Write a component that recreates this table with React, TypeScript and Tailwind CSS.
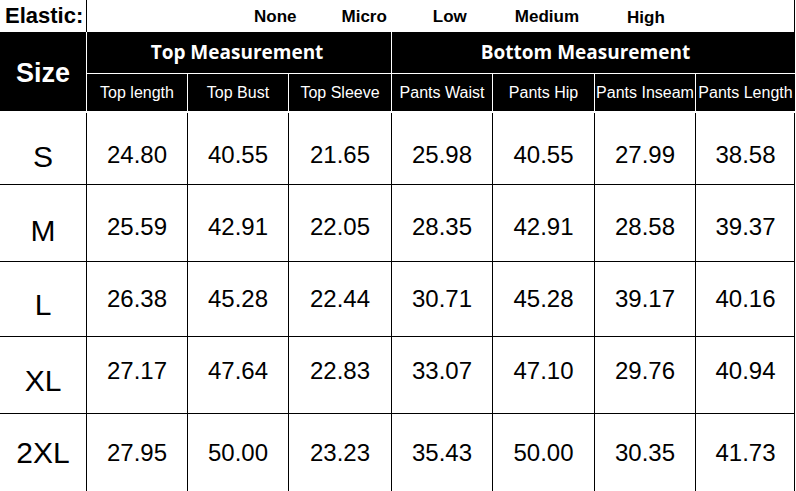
const colWidths = ["w-[101px]", "w-[101px]", "w-[103px]", "w-[101px]", "w-[102px]", "w-[101px]", "w-[99px]"];

const subHeaders = [
  "Top length",
  "Top Bust",
  "Top Sleeve",
  "Pants Waist",
  "Pants Hip",
  "Pants Inseam",
  "Pants Length",
];

const elasticOptions = [
  { label: "None", className: "ml-[167px]" },
  { label: "Micro", className: "ml-[45px]" },
  { label: "Low", className: "ml-[46px]" },
  { label: "Medium", className: "ml-[48px]" },
  { label: "High", className: "ml-[48px] pt-[2px]" },
];

const rows = [
  {
    size: "S",
    height: "h-[72px]",
    labelShift: "pt-[17px]",
    valueShift: "pt-[12px]",
    values: ["24.80", "40.55", "21.65", "25.98", "40.55", "27.99", "38.58"],
  },
  {
    size: "M",
    height: "h-[77px]",
    labelShift: "pt-[16px]",
    valueShift: "pt-[8px]",
    values: ["25.59", "42.91", "22.05", "28.35", "42.91", "28.58", "39.37"],
  },
  {
    size: "L",
    height: "h-[75px]",
    labelShift: "pt-[11px]",
    valueShift: "pt-0",
    values: ["26.38", "45.28", "22.44", "30.71", "45.28", "39.17", "40.16"],
  },
  {
    size: "XL",
    height: "h-[77px]",
    labelShift: "pt-[11px]",
    valueShift: "pb-[9px]",
    values: ["27.17", "47.64", "22.83", "33.07", "47.10", "29.76", "40.94"],
  },
  {
    size: "2XL",
    height: "h-[77px]",
    labelShift: "pt-0",
    valueShift: "pt-0",
    values: ["27.95", "50.00", "23.23", "35.43", "50.00", "30.35", "41.73"],
  },
];

export default function App() {
  return (
    <div className="w-[796px] h-[491px] overflow-hidden bg-white text-black font-['Liberation_Sans',Arial,sans-serif]">
      <div className="w-[795px]">
        {/* Elastic row */}
        <div className="flex h-[32px] border-r border-black">
          <div className="w-[87px] shrink-0 border-r border-black flex items-center pl-[5px] text-[22px] font-bold leading-none">
            Elastic:
          </div>
          <div className="flex flex-1 items-center text-[17px] font-bold leading-none">
            {elasticOptions.map((opt) => (
              <span key={opt.label} className={opt.className}>
                {opt.label}
              </span>
            ))}
          </div>
        </div>

        {/* Header */}
        <div className="flex h-[79px] bg-black text-white">
          <div className="w-[87px] shrink-0 border-r border-white flex items-center justify-center pt-[3px] text-[27px] font-bold leading-none">
            Size
          </div>
          <div className="flex flex-1 flex-col">
            <div className="flex h-[42px] border-b border-white font-['Open_Sans',sans-serif] text-[19px] font-bold leading-none">
              <div className="w-[305px] shrink-0 border-r border-white flex items-center justify-center pr-[4px]">
                Top Measurement
              </div>
              <div className="flex flex-1 items-center justify-center pr-[16px]">
                Bottom Measurement
              </div>
            </div>
            <div className="flex flex-1">
              {subHeaders.map((label, i) => (
                <div
                  key={label}
                  className={`${colWidths[i]} shrink-0 flex items-center justify-center whitespace-nowrap text-[16px] leading-none ${
                    i < subHeaders.length - 1 ? "border-r border-white" : ""
                  }`}
                >
                  {label}
                </div>
              ))}
            </div>
          </div>
        </div>

        <div className="h-[2px]" />

        {/* Data rows */}
        {rows.map((row, r) => (
          <div
            key={row.size}
            className={`flex ${row.height} border-r border-black ${r < rows.length - 1 ? "border-b" : ""}`}
          >
            <div
              className={`w-[87px] shrink-0 border-r border-black flex items-center justify-center text-[30px] leading-none ${row.labelShift}`}
            >
              {row.size}
            </div>
            {row.values.map((v, i) => (
              <div
                key={i}
                className={`${colWidths[i]} shrink-0 flex items-center justify-center text-[24px] leading-none ${
                  i < row.values.length - 1 ? "border-r border-black" : ""
                } ${row.valueShift}`}
              >
                {v}
              </div>
            ))}
          </div>
        ))}
      </div>
    </div>
  );
}
